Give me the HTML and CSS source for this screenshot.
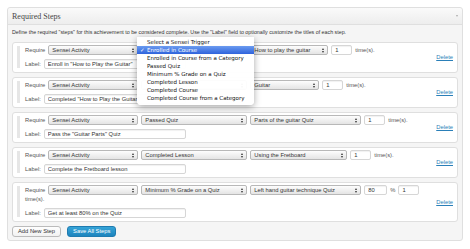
FILE: index.html
```html
<!DOCTYPE html>
<html lang="en">
<head>
  <meta charset="UTF-8" />
  <title>Required Steps</title>
  <link rel="stylesheet" href="styles.css">
</head>
<body>

  <div class="postbox">
    <div class="postbox-head">
      <h3>Required Steps</h3>
      <span class="toggle"></span>
    </div>

    <div class="inside">
      <p class="desc">Define the required "steps" for this achievement to be considered complete. Use the "Label" field to optionally customize the titles of each step.</p>

      <ul class="steps">
        <li class="step">
          <span class="handle"></span>
          <div class="fields">
            <div class="row">
              <span class="lbl">Require</span>
              <span class="select trigger">Sensei Activity</span>
              <!-- opened: its options show in .menu -->
              <span class="select action"></span>
              <span class="select short">How to play the guitar</span>
              <input class="input num" type="text" value="1" />
              <span class="lbl">time(s).</span>
            </div>
            <div class="row">
              <span class="lbl">Label:</span>
              <input class="input title" type="text" value="Enroll in &quot;How to Play the Guitar&quot;" />
            </div>
          </div>
          <a class="delete" href="#">Delete</a>
        </li>

        <li class="step">
          <span class="handle"></span>
          <div class="fields">
            <div class="row">
              <span class="lbl">Require</span>
              <span class="select trigger">Sensei Activity</span>
              <span class="select action"></span>
              <span class="select tiny">Guitar</span>
              <input class="input num" type="text" value="1" />
              <span class="lbl">time(s).</span>
            </div>
            <div class="row">
              <span class="lbl">Label:</span>
              <input class="input title" type="text" value="Completed &quot;How to Play the Guitar&quot;" />
            </div>
          </div>
          <a class="delete" href="#">Delete</a>
        </li>

        <li class="step">
          <span class="handle"></span>
          <div class="fields">
            <div class="row">
              <span class="lbl">Require</span>
              <span class="select trigger">Sensei Activity</span>
              <span class="select action">Passed Quiz</span>
              <span class="select wide">Parts of the guitar Quiz</span>
              <input class="input num" type="text" value="1" />
              <span class="lbl">time(s).</span>
            </div>
            <div class="row">
              <span class="lbl">Label:</span>
              <input class="input title" type="text" value="Pass the &quot;Guitar Parts&quot; Quiz" />
            </div>
          </div>
          <a class="delete" href="#">Delete</a>
        </li>

        <li class="step">
          <span class="handle"></span>
          <div class="fields">
            <div class="row">
              <span class="lbl">Require</span>
              <span class="select trigger">Sensei Activity</span>
              <span class="select action">Completed Lesson</span>
              <span class="select mid">Using the Fretboard</span>
              <input class="input num" type="text" value="1" />
              <span class="lbl">time(s).</span>
            </div>
            <div class="row">
              <span class="lbl">Label:</span>
              <input class="input title" type="text" value="Complete the Fretboard lesson" />
            </div>
          </div>
          <a class="delete" href="#">Delete</a>
        </li>

        <li class="step">
          <span class="handle"></span>
          <div class="fields">
            <div class="row">
              <span class="lbl">Require</span>
              <span class="select trigger">Sensei Activity</span>
              <span class="select action">Minimum % Grade on a Quiz</span>
              <span class="select wide">Left hand guitar technique Quiz</span>
              <input class="input pct" type="text" value="80" />
              <span class="lbl">%</span>
              <input class="input num" type="text" value="1" />
              <span class="lbl">time(s).</span>
            </div>
            <div class="row">
              <span class="lbl">Label:</span>
              <input class="input title" type="text" value="Get at least 80% on the Quiz" />
            </div>
          </div>
          <a class="delete" href="#">Delete</a>
        </li>
      </ul>

      <div class="actions">
        <button type="button" class="button">Add New Step</button>
        <button type="button" class="button primary">Save All Steps</button>
      </div>
    </div>

    <ul class="menu">
      <li>Select a Sensei Trigger</li>
      <li class="active"><span class="check">✓</span>Enrolled in Course</li>
      <li>Enrolled in Course from a Category</li>
      <li>Passed Quiz</li>
      <li>Minimum % Grade on a Quiz</li>
      <li>Completed Lesson</li>
      <li>Completed Course</li>
      <li>Completed Course from a Category</li>
    </ul>
  </div>

</body>
</html>
```

FILE: styles.css
```css
body {
  margin: 7px;
  background: #fff;
  font-family: "Liberation Sans", Arial, sans-serif;
  font-size: 5.8px;
  color: #333;
}
.postbox {
  position: relative;
  width: 454px;
  border: 1px solid #dfdfdf;
  border-radius: 3px;
  background: #f5f5f5;
}
.postbox-head {
  display: flex;
  align-items: center;
  justify-content: space-between;
  height: 16px;
  padding: 0 4px 0 4px;
  background: linear-gradient(#fafafa, #ededed);
  border-bottom: 1px solid #dfdfdf;
  border-radius: 3px 3px 0 0;
}
h3 {
  margin: 0;
  font-family: "Liberation Serif", "Times New Roman", serif;
  font-weight: normal;
  font-size: 8px;
  color: #464646;
}
.toggle {
  width: 0;
  height: 0;
  border-left: 1.5px solid transparent;
  border-right: 1.5px solid transparent;
  border-top: 2px solid #aaa;
}
.inside {
  padding: 3px 4px 3px;
}
.desc {
  margin: 0 0 6px;
  font-size: 5.3px;
  line-height: 8px;
  color: #333;
}
.steps {
  list-style: none;
  margin: 0;
  padding: 0;
}
.step {
  display: flex;
  background: #fff;
  border: 1px solid #dfdfdf;
  border-radius: 3px;
  padding: 2px 4px 3px;
  margin-bottom: 4px;
}
.handle {
  width: 3px;
  margin: 1px 5px 1px 0;
  background: #e6e6e6;
}
.fields {
  flex: 1;
  display: flex;
  flex-direction: column;
  gap: 4px;
}
.row {
  display: flex;
  flex-wrap: wrap;
  align-items: center;
  column-gap: 3px;
}
.lbl {
  line-height: 9px;
  color: #555;
}
.select {
  position: relative;
  box-sizing: border-box;
  height: 10px;
  line-height: 8px;
  padding: 0 8px 0 3px;
  border: 1px solid #b8b8b8;
  border-radius: 2px;
  background: linear-gradient(#fdfdfd, #e4e4e4);
  color: #333;
  white-space: nowrap;
  overflow: hidden;
}
.select::before,
.select::after {
  content: "";
  position: absolute;
  right: 3px;
  border-left: 1.5px solid transparent;
  border-right: 1.5px solid transparent;
}
.select::before {
  top: 1.5px;
  border-bottom: 2px solid #333;
}
.select::after {
  top: 4.5px;
  border-top: 2px solid #333;
}
.select.trigger { width: 90px; }
.select.action { width: 106px; }
.select.wide { width: 111px; }
.select.mid { width: 97px; }
.select.short { width: 78px; }
.select.tiny { width: 69px; }
.input {
  box-sizing: border-box;
  height: 10px;
  margin: 0;
  padding: 0 3px;
  border: 1px solid #d6d6d6;
  border-radius: 2px;
  background: #fff;
  box-shadow: inset 0 1px 1px rgba(0,0,0,0.06);
  font: inherit;
  color: #333;
}
.input.num { width: 21px; }
.input.pct { width: 23px; }
.input.title { width: 142px; }
.delete {
  align-self: center;
  color: #2a7fb8;
  text-decoration: underline;
}
.actions {
  display: flex;
  gap: 6px;
  margin-top: 2px;
}
.button {
  height: 11px;
  padding: 0 5px;
  border: 1px solid #bbb;
  border-radius: 3px;
  background: linear-gradient(#fefefe, #f2f2f2);
  font: inherit;
  color: #333;
  line-height: 9px;
}
.button.primary {
  border-color: #1f7bb0;
  background: linear-gradient(#35a4d8, #1d84bd);
  color: #fff;
}
.menu {
  position: absolute;
  left: 129px;
  top: 29px;
  width: 117px;
  margin: 0;
  padding: 1px 0 3px;
  list-style: none;
  background: rgba(255,255,255,0.96);
  border-radius: 0 0 4px 4px;
  box-shadow: 0 2px 7px rgba(0,0,0,0.35);
  font-family: "DejaVu Sans", sans-serif;
  font-size: 5.5px;
  color: #111;
}
.menu li {
  position: relative;
  height: 8px;
  line-height: 8px;
  padding-left: 10px;
  white-space: nowrap;
}
.menu li.active {
  background: linear-gradient(#6b9bf0, #2e63dc);
  color: #fff;
}
.check {
  position: absolute;
  left: 3px;
}
```
